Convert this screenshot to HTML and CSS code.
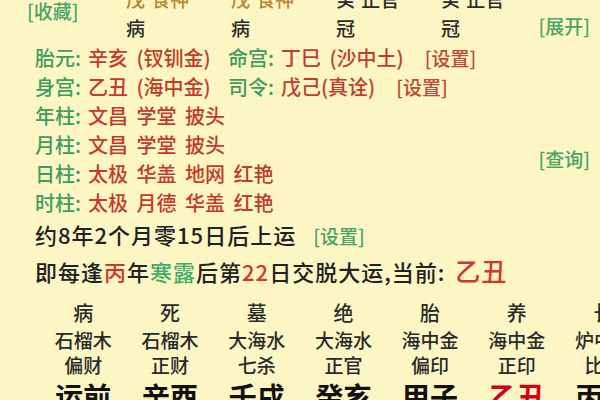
FILE: index.html
```html
<!DOCTYPE html>
<html lang="zh">
<head>
<meta charset="utf-8">
<link rel="stylesheet" href="styles.css">
</head>
<body>
<div class="page">
  <div class="top">
    <div class="fav"><span class="link">[收藏]</span></div>
    <div class="pillar"><div class="gold">戊 食神</div><div>病</div></div>
    <div class="pillar"><div class="gold">戊 食神</div><div>病</div></div>
    <div class="pillar"><div>癸 正官</div><div>冠</div></div>
    <div class="pillar last"><div>癸 正官</div><div>冠</div></div>
    <div class="expand"><span class="link">[展开]</span></div>
  </div>

  <div class="info">
    <div class="rows">
      <div class="row">
        <div class="cell c1"><span class="lab">胎元:</span><span class="val">辛亥 (钗钏金)</span></div>
        <div class="cell"><span class="lab">命宫:</span><span class="val">丁巳 (沙中土)</span><span class="set">[设置]</span></div>
      </div>
      <div class="row">
        <div class="cell c1"><span class="lab">身宫:</span><span class="val">乙丑 (海中金)</span></div>
        <div class="cell"><span class="lab">司令:</span><span class="val">戊己(真诠)</span><span class="set">[设置]</span></div>
      </div>
      <div class="row"><div class="cell"><span class="lab">年柱:</span><span class="val">文昌 学堂 披头</span></div></div>
      <div class="row"><div class="cell"><span class="lab">月柱:</span><span class="val">文昌 学堂 披头</span></div></div>
      <div class="row"><div class="cell"><span class="lab">日柱:</span><span class="val">太极 华盖 地网 红艳</span></div></div>
      <div class="row"><div class="cell"><span class="lab">时柱:</span><span class="val">太极 月德 华盖 红艳</span></div></div>
    </div>
    <div class="aside"><span class="link">[查询]</span></div>
  </div>

  <div class="luck">
    <div class="line">约8年2个月零15日后上运<span class="link gset">[设置]</span></div>
    <div class="line">即每逢<span class="r">丙</span>年<span class="g">寒露</span>后第<span class="r">22</span>日交脱大运,当前: <span class="cur">乙丑</span></div>
  </div>

  <div class="grid">
    <div class="c st">病</div><div class="c st">死</div><div class="c st">墓</div><div class="c st">绝</div><div class="c st">胎</div><div class="c st">养</div><div class="c st">长</div>
    <div class="c ny">石榴木</div><div class="c ny">石榴木</div><div class="c ny">大海水</div><div class="c ny">大海水</div><div class="c ny">海中金</div><div class="c ny">海中金</div><div class="c ny">炉中火</div>
    <div class="c ss">偏财</div><div class="c ss">正财</div><div class="c ss">七杀</div><div class="c ss">正官</div><div class="c ss">偏印</div><div class="c ss">正印</div><div class="c ss">比肩</div>
    <div class="c gz">运前</div><div class="c gz">辛酉</div><div class="c gz">壬戌</div><div class="c gz">癸亥</div><div class="c gz">甲子</div><div class="c gz now">乙丑</div><div class="c gz">丙寅</div>
  </div>
</div>
</body>
</html>
```

FILE: styles.css
```css
html, body {
  margin: 0;
  padding: 0;
}
body {
  width: 600px;
  height: 400px;
  overflow: hidden;
  background: #fbf6c3;
  font-family: "Noto Sans CJK SC", "Noto Sans", sans-serif;
  font-weight: 500;
  color: #222;
}
.page {
  width: 600px;
}
.link {
  color: #4aa466;
  font-size: 19px;
  white-space: nowrap;
}

/* top pillars */
.top {
  display: flex;
  margin-top: -16px;
  padding-left: 27px;
  padding-right: 10px;
}
.fav {
  width: 99px;
  flex-shrink: 0;
  display: flex;
  align-items: flex-end;
  padding-bottom: 20px;
}
.fav .link {
  line-height: 22px;
}
.pillar {
  width: 105px;
  flex-shrink: 0;
  font-size: 19px;
  line-height: 29px;
  color: #2a2a2a;
  word-spacing: 2px;
  white-space: nowrap;
}
.pillar.last {
  width: 80px;
}
.pillar .gold {
  color: #b8862f;
}
.expand {
  margin-left: auto;
  flex-shrink: 0;
  align-self: flex-end;
  line-height: 29px;
}

/* info rows */
.info {
  display: flex;
  padding-left: 35px;
  padding-right: 10px;
  margin-top: 1px;
}
.rows {
  flex: 1;
}
.row {
  display: flex;
  font-size: 20px;
  line-height: 29px;
  white-space: nowrap;
}
.c1 {
  width: 193px;
}
.lab {
  color: #3f9d5e;
}
.val {
  color: #c23b2b;
  margin-left: 7px;
  word-spacing: 4px;
}
.set {
  color: #c0473a;
  font-size: 19px;
  margin-left: 21px;
}
.aside {
  padding-top: 104px;
  line-height: 24px;
}

/* luck lines */
.luck {
  padding-left: 35px;
  margin-top: 0;
}
.line {
  font-size: 22px;
  letter-spacing: 1px;
  line-height: 35px;
  color: #222;
  white-space: nowrap;
}
.gset {
  margin-left: 17px;
  font-size: 19px;
  letter-spacing: 0;
}
.r {
  color: #d2362a;
}
.g {
  color: #3fae66;
}
.cur {
  color: #d2362a;
  font-size: 25px;
  margin-left: 4px;
}

/* bottom grid */
.grid {
  display: grid;
  grid-template-columns: repeat(7, 86.7px);
  margin-left: 40px;
  margin-top: 10px;
}
.c {
  text-align: center;
  white-space: nowrap;
  color: #2a2a2a;
}
.st {
  font-size: 20px;
  line-height: 28px;
}
.ny {
  font-size: 19px;
  line-height: 26px;
}
.ss {
  font-size: 19px;
  line-height: 23px;
}
.gz {
  font-size: 28px;
  font-weight: bold;
  line-height: 40px;
  color: #111;
}
.gz.now {
  color: #d0021b;
}
```
